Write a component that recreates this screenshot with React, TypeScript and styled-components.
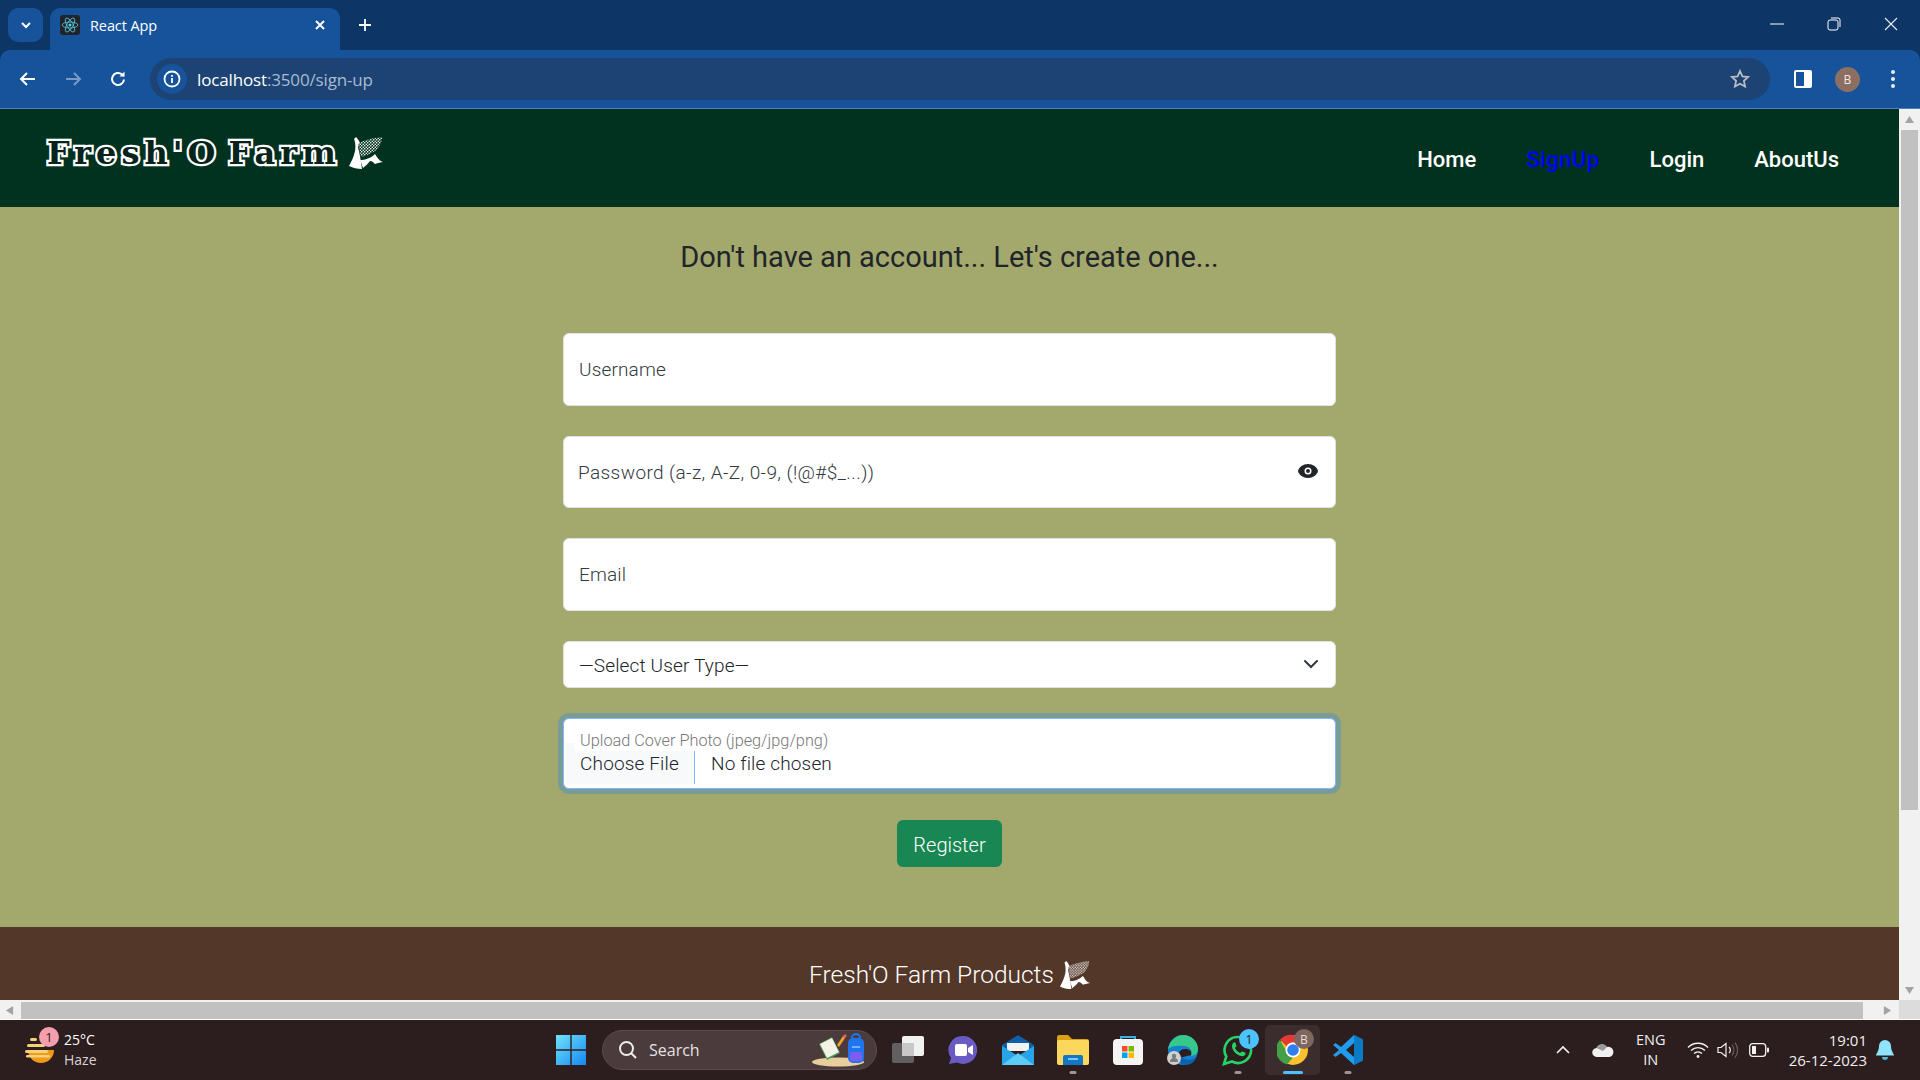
import React, { useId } from "react";
import styled, { createGlobalStyle } from "styled-components";

const Global = createGlobalStyle`
  html, body { margin: 0; padding: 0; height: 100%; overflow: hidden; background: #2c1d1f; }
  * { box-sizing: border-box; }
  #root { height: 100%; }
`;

const Screen = styled.div`
  width: 1920px; height: 1080px; display: flex; flex-direction: column; overflow: hidden;
  font-family: Roboto, "Liberation Sans", sans-serif;
`;

/* ---------- browser chrome ---------- */
const TabStrip = styled.div`
  height: 50px; flex: none; background: #0d3565; display: flex; align-items: flex-end; padding-left: 8px; color: #fff;
  font-family: "Open Sans", "Noto Sans", sans-serif;
`;
const TabSearch = styled.div`
  width: 35px; height: 34px; margin-bottom: 8px; border-radius: 10px; background: #16539b;
  display: flex; align-items: center; justify-content: center;
`;
const Tab = styled.div`
  width: 290px; height: 42px; margin-left: 7px; border-radius: 10px 10px 0 0; background: #16539b;
  display: flex; align-items: center; padding: 0 14px 8px 10px; gap: 10px; font-size: 14.500px;
`;
const Favicon = styled.div`
  width: 20px; height: 20px; border-radius: 3px; background: #20232a; display: flex; align-items: center; justify-content: center; flex: none;
`;
const TabTitle = styled.span` flex: 1; letter-spacing: -0.1px; `;
const NewTab = styled.div` width: 50px; height: 34px; margin-bottom: 8px; display: flex; align-items: center; justify-content: center; `;
const Spacer = styled.div` flex: 1; `;
const WinControls = styled.div`
  display: flex; align-self: flex-start; height: 50px; padding-right: 22px; gap: 43px; align-items: center; padding-bottom: 2px;
`;

const Toolbar = styled.div`
  height: 58px; flex: none; background: #16539b; border-radius: 10px 10px 0 0; display: flex; align-items: flex-start;
  padding: 8px 5px 0;
`;
const ToolbarWrap = styled.div` background: #0d3565; flex: none; `;
const ToolBtn = styled.div`
  width: 45px; height: 42px; display: flex; align-items: center; justify-content: center; flex: none;
`;
const Omnibox = styled.div`
  width: 1620px; height: 42px; margin: 0 10px 0 10px; flex: none; background: #1c4373; border-radius: 21px;
  display: flex; align-items: center; padding: 0 20px 0 7px;
`;
const InfoBubble = styled.div`
  width: 30px; height: 30px; border-radius: 50%; background: #16539b; display: flex; align-items: center; justify-content: center; flex: none;
`;
const Url = styled.div`
  margin-left: 10px; flex: 1; font-family: "Open Sans", "Noto Sans", sans-serif; font-size: 17px; color: #a9bbd2; letter-spacing: -0.15px;
  b { font-weight: 400; color: #fff; }
`;
const Avatar = styled.div`
  width: 25px; height: 25px; border-radius: 50%; background: #8d6e63; color: #f0e6e2; font-size: 12px;
  display: flex; align-items: center; justify-content: center; font-family: "Open Sans", sans-serif;
`;
const ChromeLine = styled.div` height: 1px; flex: none; background: #4e7fbd; `;

/* ---------- viewport ---------- */
const Viewport = styled.div` height: 911px; flex: none; display: flex; background: #f1f1f1; `;
const ViewColumn = styled.div` width: 1899px; flex: none; display: flex; flex-direction: column; `;
const Page = styled.div` height: 891px; flex: none; display: flex; flex-direction: column; overflow: hidden; `;

const Nav = styled.nav`
  height: 98px; flex: none; background: #013220; display: flex; align-items: center; justify-content: space-between;
  padding: 0 60px 0 47px;
`;
const Brand = styled.div` display: flex; align-items: center; gap: 8px; margin-top: -10px; `;
const BrandName = styled.div`
  font-family: "DejaVu Serif", serif; font-weight: 700; font-size: 32px; letter-spacing: 5px; word-spacing: -8px; line-height: 40px; white-space: nowrap;
  color: #06241a; -webkit-text-stroke: 4.500px #fff; paint-order: stroke fill;
`;
const NavLinks = styled.div` display: flex; gap: 50px; margin-top: 4px; `;
const NavLink = styled.a<{ $active?: boolean }>`
  font-size: 22px; font-weight: 500; line-height: 30px; color: ${p => (p.$active ? "#0000ff" : "#fff")};
  letter-spacing: ${p => (p.$active ? 0.5 : 0)}px;
`;

const Main = styled.main`
  height: 720px; flex: none; background: #a3a86d; display: flex; flex-direction: column; align-items: center; padding-top: 30px; color: #212529;
`;
const Heading = styled.h1`
  margin: 0 0 56px; font-size: 29px; font-weight: 400; line-height: 40px;
`;
const Form = styled.form` width: 773px; display: flex; flex-direction: column; align-items: center; `;
const InputBox = styled.div<{ $h: number }>`
  width: 100%; height: ${p => p.$h}px; margin-bottom: 30px; position: relative; flex: none;
`;
const TextInput = styled.input<{ $inset?: number; $track?: number }>`
  width: 100%; height: 100%; border: 1px solid #dee2e6; border-radius: 6px; background: #fff; outline: none;
  padding: 0 50px 0 ${p => p.$inset ?? 15}px; font-family: Roboto, sans-serif; font-size: 19px; font-weight: 300; color: #212529;
  letter-spacing: ${p => p.$track ?? 0.15}px;
  &::placeholder { color: #333a40; opacity: 1; }
`;
const EyeBtn = styled.span` position: absolute; right: 17px; top: 24px; display: flex; `;
const Select = styled.select`
  width: 100%; height: 100%; appearance: none; border: 1px solid #dee2e6; border-radius: 6px; background: #fff; outline: none;
  padding: 2px 15px 0; font-family: Roboto, sans-serif; font-size: 19px; font-weight: 300; color: #212529; letter-spacing: 0.15px;
`;
const Chevron = styled.span` position: absolute; right: 17px; top: 15px; display: flex; `;
const FileBox = styled.div`
  width: 100%; height: 71px; margin-bottom: 31px; position: relative; flex: none; padding: 24px 0 0 1px;
  border: 1px solid #86b7fe; border-radius: 6px; background: #fff; box-shadow: 0 0 0 5px #7a9c99;
`;
const FloatLabel = styled.label`
  position: absolute; left: 10px; top: 12px; padding: 0 6px; background: #fff; border-radius: 4px; font-size: 16.300px; font-weight: 300; line-height: 20px; color: #777;
`;
const FileInput = styled.input`
  display: block; width: 100%; height: 41px; font-family: Roboto, sans-serif; font-size: 19px; font-weight: 300; color: #212529; outline: none; letter-spacing: 0.15px;
  &::file-selector-button {
    height: 41px; width: 130px; margin-right: 16px; padding: 0; border: 0; border-right: 1px solid #86b7fe; border-radius: 0;
    background: #f8f9fa; color: #212529; font: inherit; letter-spacing: inherit;
  }
`;
const SubmitBtn = styled.button`
  width: 105px; height: 47px; border: 0; border-radius: 6px; background: #198754; color: #fff; font-family: Roboto, sans-serif; font-size: 20px; font-weight: 300; padding: 2px 0 0;
`;
const Footer = styled.footer`
  height: 73px; flex: none; background: #533829; color: #fff; display: flex; align-items: flex-start; justify-content: center; gap: 6px; padding-top: 33px;
  font-size: 24.500px; font-weight: 300; line-height: 30px;
`;

const HScroll = styled.div` height: 20px; flex: none; display: flex; align-items: center; padding-top: 2px; background: #f1f1f1; border-bottom: 1px solid #fff; `;
const HThumb = styled.div` width: 1842px; height: 17px; background: #c1c1c1; `;
const ArrowCell = styled.div` width: 21px; display: flex; justify-content: center; flex: none; padding-right: 2px; `;
const ArrowEnd = styled.div` width: 36px; padding-left: 20px; display: flex; flex: none; `;
const VScroll = styled.div` width: 21px; flex: none; display: flex; flex-direction: column; align-items: center; background: #f1f1f1; `;
const VThumb = styled.div` width: 17px; height: 680px; background: #c1c1c1; `;
const VArrowTop = styled.div` height: 21px; display: flex; align-items: center; `;
const VArrowBottom = styled.div` height: 20px; margin-top: auto; display: flex; align-items: center; `;
const VCorner = styled.div` width: 100%; height: 20px; background: #dcdcdc; border-bottom: 1px solid #fff; flex: none; `;

/* ---------- taskbar ---------- */
const Taskbar = styled.div`
  height: 60px; flex: 1; background: #2c1d1f; display: grid; grid-template-columns: 543px 1fr auto; align-items: center; color: #fff;
  font-family: "Open Sans", "Noto Sans", sans-serif;
`;
const Weather = styled.div` display: flex; align-items: center; padding-left: 24px; gap: 8px; position: relative; `;
const WeatherBadge = styled.span`
  position: absolute; left: 39px; top: -3px; width: 20px; height: 20px; border-radius: 50%; background: #f59fad; color: #2c1d1f;
  font-size: 13px; display: flex; align-items: center; justify-content: center;
`;
const WeatherText = styled.div`
  font-size: 14px; line-height: 20px; color: #fff;
  span { display: block; color: #d8d2d2; }
`;
const Center = styled.div` display: flex; align-items: center; `;
const TaskCell = styled.div<{ $active?: boolean }>`
  width: 55px; height: 50px; flex: none; display: flex; align-items: center; justify-content: center; position: relative; border-radius: 5px;
  background: ${p => (p.$active ? "#3b2c2e" : "transparent")};
`;
const RunDot = styled.span<{ $active?: boolean }>`
  position: absolute; bottom: 1px; left: 50%; transform: translateX(-50%); height: 3px; border-radius: 2px;
  width: ${p => (p.$active ? 20 : 7)}px; background: ${p => (p.$active ? "#4cc2ff" : "#9d9496")};
`;
const CountBadge = styled.span<{ $bg: string; $fg: string }>`
  position: absolute; right: 6px; top: 4px; width: 20px; height: 20px; border-radius: 50%; background: ${p => p.$bg}; color: ${p => p.$fg};
  font-size: 12px; display: flex; align-items: center; justify-content: center;
`;
const SearchPill = styled.div`
  width: 275px; height: 40px; margin: 0 3px 0 4px; border-radius: 20px; background: #4b3b3d; border: 1px solid #5b4c4e; display: flex; align-items: center;
  padding: 0 8px 0 15px; gap: 11px; font-size: 16px; color: #e6e1e1;
`;
const SearchWord = styled.span` flex: 1; `;
const Tray = styled.div` display: flex; align-items: center; padding-right: 17px; `;
const TrayText = styled.div<{ $right?: boolean }>`
  font-size: ${p => (p.$right ? 15 : 14.5)}px; line-height: 20px; text-align: ${p => (p.$right ? "right" : "center")}; color: #f1eeee; margin-left: ${p => (p.$right ? 13 : 0)}px;
`;
const TrayIcon = styled.span<{ $w: number; $after?: number }>`
  width: ${p => p.$w}px; margin-right: ${p => p.$after ?? 0}px; display: flex; justify-content: center; flex: none;
`;

/* ---------- drawings ---------- */
const Corn: React.FC<{ size: number; bg: string }> = ({ size, bg }) => {
  const id = useId();
  return (
    <svg width={size} height={size} viewBox="0 0 34 34">
      <defs>
        <pattern id={id} width="3" height="3" patternUnits="userSpaceOnUse">
          <rect width="3" height="3" fill={bg} />
          <circle cx=".75" cy=".75" r=".78" fill="#fff" />
          <circle cx="2.250" cy="2.250" r=".78" fill="#fff" />
        </pattern>
      </defs>
      <path d="M9 8 C14 4 25 2 33 1 C33 6 30 12 26 15 C21 18 16 20 12 21 C11 16 10 12 9 8Z" fill={`url(#${id})`} />
      <path d="M7 1 C9 3 10 5 11 7 C9 8 8.500 11 10 15 C11 20 12 26 13 33 C8 33 4 32 0 30 C2 26 5 21 6 15 C7 10 6 5 5 3Z" fill="#fff" />
      <path d="M11 24 C16 24 22 22 26 18 C28 21 30 25 34 26 C30 27 28 27 26 28 C24 26 23 25 21 25 C19 28 16 30 14 32 C13 29 12 26 11 24Z" fill="#fff" />
    </svg>
  );
};

const Ic = {
  Chev: () => <svg width="12" height="8" viewBox="0 0 12 8"><path d="M2 2l4 4 4-4" fill="none" stroke="#fff" strokeWidth="2" /></svg>,
  Atom: () => (
    <svg width="18" height="18" viewBox="-12 -12 24 24" fill="none" stroke="#5ad4e6" strokeWidth="1">
      <ellipse rx="10.500" ry="4" /><ellipse rx="10.500" ry="4" transform="rotate(60)" /><ellipse rx="10.500" ry="4" transform="rotate(120)" />
      <circle r="2" fill="#5ad4e6" stroke="none" />
    </svg>
  ),
  Close: () => <svg width="12" height="12" viewBox="0 0 12 12"><path d="M2 2l8 8M10 2l-8 8" stroke="#fff" strokeWidth="1.800" /></svg>,
  Plus: () => <svg width="14" height="14" viewBox="0 0 14 14"><path d="M7 1v12M1 7h12" stroke="#fff" strokeWidth="1.800" /></svg>,
  Min: () => <svg width="14" height="2" viewBox="0 0 14 2"><path d="M0 1h14" stroke="#fff" /></svg>,
  Restore: () => <svg width="14" height="14" viewBox="0 0 14 14" fill="none" stroke="#fff"><rect x="1" y="3" width="10" height="10" rx="2" /><path d="M4 1h7a2 2 0 0 1 2 2v7" /></svg>,
  X: () => <svg width="14" height="14" viewBox="0 0 14 14"><path d="M1 1l12 12M13 1L1 13" stroke="#e8eef6" strokeWidth="1.100" /></svg>,
  Back: () => <svg width="18" height="16" viewBox="0 0 18 16" fill="none" stroke="#fff" strokeWidth="2"><path d="M16 8H2M8 2L2 8l6 6" /></svg>,
  Fwd: () => <svg width="18" height="16" viewBox="0 0 18 16" fill="none" stroke="#7b9ac4" strokeWidth="2"><path d="M2 8h14M10 2l6 6-6 6" /></svg>,
  Reload: () => <svg width="18" height="18" viewBox="0 0 18 18" fill="none" stroke="#fff" strokeWidth="2"><path d="M15 9.500A6 6 0 1 1 12.800 4.300L15 6" /><path d="M15.500 1.500v5h-5" fill="#fff" stroke="none" /></svg>,
  Info: () => <svg width="18" height="18" viewBox="0 0 18 18" fill="none" stroke="#fff" strokeWidth="1.800"><circle cx="9" cy="9" r="7.500" /><path d="M9 8v5M9 5v1.800" /></svg>,
  Star: () => <svg width="20" height="20" viewBox="0 0 20 20" fill="none" stroke="#b9bcc2" strokeWidth="1.800"><path d="M10 2l2.400 5.400 5.800.6-4.300 3.900 1.200 5.700L10 14.700l-5.100 2.900 1.200-5.700L1.800 8l5.800-.6z" /></svg>,
  Panel: () => <svg width="18" height="18" viewBox="0 0 18 18"><rect width="18" height="18" rx="2" fill="#fff" /><rect x="2" y="2" width="8" height="14" fill="#16539b" /></svg>,
  Dots: () => <svg width="4" height="18" viewBox="0 0 4 18" fill="#e8eef6"><circle cx="2" cy="2" r="2" /><circle cx="2" cy="9" r="2" /><circle cx="2" cy="16" r="2" /></svg>,
  Eye: () => <svg width="22" height="22" viewBox="0 0 22 22"><path d="M11 4C6 4 2 7 1 11c1 4 5 7 10 7s9-3 10-7c-1-4-5-7-10-7z" fill="#212529" /><circle cx="11" cy="11" r="3.500" fill="#fff" /><circle cx="11" cy="11" r="2" fill="#212529" /></svg>,
  Down: () => <svg width="16" height="16" viewBox="0 0 16 16" fill="none" stroke="#343a40" strokeWidth="2" strokeLinecap="round"><path d="M2 5l6 6 6-6" /></svg>,
  Tri: ({ r }: { r: number }) => <svg width="9" height="9" viewBox="0 0 10 10" style={{ transform: `rotate(${r}deg)` }}><path d="M5 1l5 8H0z" fill="#a3a3a3" /></svg>,
  Search: () => <svg width="20" height="20" viewBox="0 0 20 20" fill="none" stroke="#f0ecec" strokeWidth="2"><circle cx="8.500" cy="8.500" r="6.500" /><path d="M13 13l5 5" /></svg>,
  Art: () => (
    <svg width="56" height="34" viewBox="0 0 56 34">
      <ellipse cx="26" cy="29" rx="26" ry="4.500" fill="#e9cd9c" />
      <path d="M7 11l13-7 8 16-13 7z" fill="#4c9f58" /><path d="M8 11l12-6 7 14-12 6z" fill="#f4f2e6" />
      <path d="M25 12l6-9 2 2-6 9z" fill="#f2a032" /><path d="M31 3l2-2 2 2-2 2z" fill="#ef5a5a" />
      <rect x="36" y="5" width="16" height="25" rx="5" fill="#1f74ef" /><path d="M40 5a4 4 0 0 1 8 0" stroke="#1f74ef" strokeWidth="2" fill="none" />
      <rect x="38" y="19" width="12" height="9" rx="2" fill="#7d5df0" /><rect x="40" y="13" width="8" height="2" fill="#6fb4ff" />
    </svg>
  ),
  Sun: () => (
    <svg width="32" height="30" viewBox="0 0 32 30">
      <path d="M4 15a13 13 0 0 0 26 0z" fill="#ef9a1a" />
      <g fill="#f4d27a"><rect x="6" y="3" width="7" height="3" rx="1.500" /><rect x="3" y="9" width="18" height="3" rx="1.500" /><rect x="1" y="15" width="16" height="3" rx="1.500" /><rect x="14" y="15" width="10" height="3" rx="1.500" /><rect x="2" y="20" width="24" height="2.500" rx="1.200" /></g>
    </svg>
  ),
  Win: () => (
    <svg width="30" height="30" viewBox="0 0 30 30">
      <defs><linearGradient id="wg" x1="0" y1="0" x2="1" y2="1"><stop offset="0" stopColor="#6fe3fb" /><stop offset="1" stopColor="#1587ef" /></linearGradient></defs>
      <path d="M0 0h14.300v14.300H0zM15.700 0H30v14.300H15.700zM0 15.700h14.300V30H0zM15.700 15.700H30V30H15.700z" fill="url(#wg)" />
    </svg>
  ),
  TaskView: () => (
    <svg width="32" height="30" viewBox="0 0 32 30">
      <rect x="10" y="1" width="22" height="20" rx="2" fill="#f1f1f1" />
      <rect x="0" y="8" width="22" height="20" rx="2" fill="#6b6b6b" fillOpacity=".85" />
      <rect x="10" y="8" width="12" height="13" fill="#c8c8c8" />
    </svg>
  ),
  Meet: () => (
    <svg width="30" height="30" viewBox="0 0 30 30">
      <path d="M15 1a14 14 0 1 1-6 26.600L1 29l2-6A14 14 0 0 1 15 1z" fill="#6a5bc4" />
      <rect x="7" y="9" width="12" height="12" rx="2" fill="#fff" /><path d="M20 13l5-3v10l-5-3z" fill="#fff" />
    </svg>
  ),
  Mail: () => (
    <svg width="32" height="30" viewBox="0 0 32 30">
      <path d="M0 10L16 0l16 10v4H0z" fill="#0f5ea8" /><path d="M5 8h22v8H5z" fill="#f2f2f2" />
      <path d="M0 11l16 10 16-10v19H0z" fill="#29a4e6" /><path d="M0 30l16-12 16 12z" fill="#5ccbf5" />
    </svg>
  ),
  Folder: () => (
    <svg width="32" height="30" viewBox="0 0 32 30">
      <path d="M0 2a2 2 0 0 1 2-2h9l4 4h15a2 2 0 0 1 2 2v4H0z" fill="#d9a111" /><rect y="5" width="32" height="25" rx="2" fill="#fbd75c" />
      <path d="M6 22a2 2 0 0 1 2-2h16a2 2 0 0 1 2 2v8H6z" fill="#1277c7" /><rect x="11" y="23" width="10" height="2" fill="#7dc6f5" />
    </svg>
  ),
  Store: () => (
    <svg width="30" height="30" viewBox="0 0 30 30">
      <path d="M8 5V2h14v3" fill="none" stroke="#39b1e8" strokeWidth="2" /><rect y="4" width="30" height="26" rx="4" fill="#f4f4f4" />
      <rect x="9" y="11" width="5.500" height="5.500" fill="#f25022" /><rect x="15.500" y="11" width="5.500" height="5.500" fill="#7fba00" />
      <rect x="9" y="17.500" width="5.500" height="5.500" fill="#00a4ef" /><rect x="15.500" y="17.500" width="5.500" height="5.500" fill="#ffb900" />
    </svg>
  ),
  Edge: () => (
    <svg width="32" height="32" viewBox="0 0 32 32">
      <circle cx="16" cy="16" r="15" fill="#1382cf" /><path d="M1 15C3 5 11 1 16 1c9 0 15 7 15 14 0 5-4 7-8 7 3-3 2-9-6-10C9 11 3 13 1 15z" fill="#36c98a" />
      <path d="M12 24c-2-4 1-9 6-9s7 2 6 7c-1-1-3 0-12 2z" fill="#2c1d1f" /><path d="M14 22c3 4 10 6 16 0-3 9-11 10-15 8-2-1-2-5-1-8z" fill="#0d62ad" />
      <circle cx="7" cy="24" r="7" fill="#cfcfcf" /><circle cx="7" cy="22" r="2.200" fill="#7a7a7a" /><path d="M3 28a4 4 0 0 1 8 0z" fill="#7a7a7a" />
    </svg>
  ),
  WhatsApp: () => (
    <svg width="32" height="32" viewBox="0 0 32 32">
      <path d="M16 3a13 13 0 1 1-6 24.500L2 30l2.300-7.500A13 13 0 0 1 16 3z" fill="none" stroke="#25d366" strokeWidth="2.600" />
      <path d="M11 9c1-1 2-1 2.500 0l1 3-1.500 2c1 2 3 4 5 5l2-1.500 3 1c1 1 .5 2-.5 3-3 2-8-1-10-3.500S9 12 11 9z" fill="#25d366" />
    </svg>
  ),
  Chrome: () => (
    <svg width="32" height="32" viewBox="0 0 32 32">
      <circle cx="16" cy="16" r="15" fill="#fbc02d" /><path d="M16 1a15 15 0 0 1 13 7.500H16a7.500 7.500 0 0 0-6.500 3.700L3 5.800A15 15 0 0 1 16 1z" fill="#e53935" />
      <path d="M3 5.800l6.500 11.700A7.500 7.500 0 0 0 16 23.500L10 30.500A15 15 0 0 1 3 5.800z" fill="#43a047" />
      <circle cx="16" cy="16" r="7.500" fill="#fff" /><circle cx="16" cy="16" r="5.800" fill="#2f7ff0" />
    </svg>
  ),
  VSCode: () => (
    <svg width="32" height="32" viewBox="0 0 32 32">
      <path d="M22 1l9 4.500v21L22 31 9 19l-5.500 4L1 21l6-5-6-5 2.500-2L9 13z" fill="#1f9cf0" /><path d="M22 9l-8 7 8 7z" fill="#2c1d1f" />
      <path d="M22 1l9 4.500v21L22 31z" fill="#0065a9" opacity=".6" />
    </svg>
  ),
  Up: () => <svg width="16" height="10" viewBox="0 0 16 10" fill="none" stroke="#f4f1f1" strokeWidth="1.600"><path d="M2 8l6-6 6 6" /></svg>,
  Cloud: () => <svg width="22" height="14" viewBox="0 0 22 14"><path d="M5 14a4.500 4.500 0 0 1-.5-9A6 6 0 0 1 15 4a5 5 0 0 1 2.500 10z" fill="#f1f1f1" /><path d="M4.500 5A6 6 0 0 1 15 4l-4 4z" fill="#9a9a9a" /></svg>,
  Wifi: () => <svg width="22" height="16" viewBox="0 0 22 16" fill="none" stroke="#f4f1f1" strokeWidth="1.400"><path d="M1 5.500a14 14 0 0 1 20 0M4 8.500a10 10 0 0 1 14 0M7 11.500a6 6 0 0 1 8 0" /><circle cx="11" cy="14.500" r="1.400" fill="#f4f1f1" stroke="none" /></svg>,
  Sound: () => <svg width="22" height="18" viewBox="0 0 22 18" fill="none" stroke="#f4f1f1" strokeWidth="1.200"><path d="M1 6.500h3l5-4v13l-5-4H1z" /><path d="M12 6a4 4 0 0 1 0 6" /><path d="M15 3.500a9 9 0 0 1 0 11M18 1.500a12 12 0 0 1 0 15" stroke="#6d6062" /></svg>,
  Battery: () => <svg width="20" height="14" viewBox="0 0 20 14"><rect x=".7" y=".7" width="16" height="12.600" rx="3" fill="none" stroke="#f4f1f1" strokeWidth="1.300" /><rect x="3" y="3" width="4" height="8" fill="#f4f1f1" /><rect x="18" y="4.500" width="2" height="5" rx="1" fill="#f4f1f1" /></svg>,
  Bell: () => <svg width="18" height="20" viewBox="0 0 18 20"><path d="M9 0a6 6 0 0 1 6 6c0 5 3 8 3 9.500H0C0 14 3 11 3 6a6 6 0 0 1 6-6z" fill="#8fe3fb" /><path d="M6 17h6a3 3 0 0 1-6 0z" fill="#4bb8dc" /></svg>,
};

export default function App() {
  return (
    <Screen>
      <Global />
      <TabStrip>
        <TabSearch><Ic.Chev /></TabSearch>
        <Tab>
          <Favicon><Ic.Atom /></Favicon>
          <TabTitle>React App</TabTitle>
          <Ic.Close />
        </Tab>
        <NewTab><Ic.Plus /></NewTab>
        <Spacer />
        <WinControls><Ic.Min /><Ic.Restore /><Ic.X /></WinControls>
      </TabStrip>
      <ToolbarWrap>
        <Toolbar>
          <ToolBtn><Ic.Back /></ToolBtn>
          <ToolBtn><Ic.Fwd /></ToolBtn>
          <ToolBtn><Ic.Reload /></ToolBtn>
          <Omnibox>
            <InfoBubble><Ic.Info /></InfoBubble>
            <Url><b>localhost</b>:3500/sign-up</Url>
            <Ic.Star />
          </Omnibox>
          <ToolBtn><Ic.Panel /></ToolBtn>
          <ToolBtn><Avatar>B</Avatar></ToolBtn>
          <ToolBtn><Ic.Dots /></ToolBtn>
        </Toolbar>
      </ToolbarWrap>
      <ChromeLine />
      <Viewport>
        <ViewColumn>
          <Page>
            <Nav>
              <Brand>
                <BrandName>Fresh'O Farm</BrandName>
                <Corn size={34} bg="#013220" />
              </Brand>
              <NavLinks>
                <NavLink>Home</NavLink>
                <NavLink $active>SignUp</NavLink>
                <NavLink>Login</NavLink>
                <NavLink>AboutUs</NavLink>
              </NavLinks>
            </Nav>
            <Main>
              <Heading>Don't have an account... Let's create one...</Heading>
              <Form>
                <InputBox $h={73}><TextInput placeholder="Username" /></InputBox>
                <InputBox $h={72}>
                  <TextInput $inset={14} $track={0.4} placeholder="Password (a-z, A-Z, 0-9, (!@#$_...))" />
                  <EyeBtn><Ic.Eye /></EyeBtn>
                </InputBox>
                <InputBox $h={73}><TextInput placeholder="Email" /></InputBox>
                <InputBox $h={47}>
                  <Select defaultValue="none"><option value="none">—Select User Type—</option></Select>
                  <Chevron><Ic.Down /></Chevron>
                </InputBox>
                <FileBox>
                  <FileInput type="file" />
                  <FloatLabel>Upload Cover Photo (jpeg/jpg/png)</FloatLabel>
                </FileBox>
                <SubmitBtn type="button">Register</SubmitBtn>
              </Form>
            </Main>
            <Footer>
              Fresh'O Farm Products
              <Corn size={30} bg="#533829" />
            </Footer>
          </Page>
          <HScroll>
            <ArrowCell><Ic.Tri r={-90} /></ArrowCell>
            <HThumb />
            <ArrowEnd><Ic.Tri r={90} /></ArrowEnd>
          </HScroll>
        </ViewColumn>
        <VScroll>
          <VArrowTop><Ic.Tri r={0} /></VArrowTop>
          <VThumb />
          <VArrowBottom><Ic.Tri r={180} /></VArrowBottom>
          <VCorner />
        </VScroll>
      </Viewport>
      <Taskbar>
        <Weather>
          <Ic.Sun />
          <WeatherBadge>1</WeatherBadge>
          <WeatherText>25°C<span>Haze</span></WeatherText>
        </Weather>
        <Center>
          <TaskCell><Ic.Win /></TaskCell>
          <SearchPill>
            <Ic.Search />
            <SearchWord>Search</SearchWord>
            <Ic.Art />
          </SearchPill>
          <TaskCell><Ic.TaskView /></TaskCell>
          <TaskCell><Ic.Meet /></TaskCell>
          <TaskCell><Ic.Mail /></TaskCell>
          <TaskCell><Ic.Folder /><RunDot /></TaskCell>
          <TaskCell><Ic.Store /></TaskCell>
          <TaskCell><Ic.Edge /></TaskCell>
          <TaskCell><Ic.WhatsApp /><RunDot /><CountBadge $bg="#4cc2ff" $fg="#1b1b1b">1</CountBadge></TaskCell>
          <TaskCell $active><Ic.Chrome /><RunDot $active /><CountBadge $bg="#7d675f" $fg="#e8dcd8">B</CountBadge></TaskCell>
          <TaskCell><Ic.VSCode /><RunDot /></TaskCell>
        </Center>
        <Tray>
          <TrayIcon $w={38}><Ic.Up /></TrayIcon>
          <TrayIcon $w={42}><Ic.Cloud /></TrayIcon>
          <TrayIcon $w={54} $after={4}><TrayText>ENG<br />IN</TrayText></TrayIcon>
          <TrayIcon $w={32}><Ic.Wifi /></TrayIcon>
          <TrayIcon $w={28}><Ic.Sound /></TrayIcon>
          <TrayIcon $w={34}><Ic.Battery /></TrayIcon>
          <TrayText $right>19:01<br />26-12-2023</TrayText>
          <TrayIcon $w={36}><Ic.Bell /></TrayIcon>
        </Tray>
      </Taskbar>
    </Screen>
  );
}
